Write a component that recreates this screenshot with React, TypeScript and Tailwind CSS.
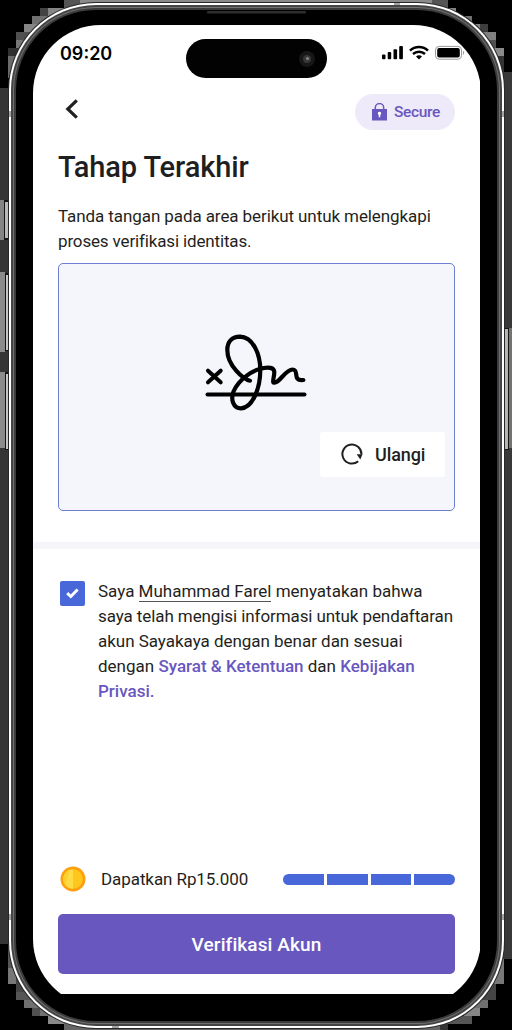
import React from 'react';

type Block = [number, number, number, number, string];

const BLOCKS: Block[] = [
  [0, 88, 10, 856, '#353535'],
  [503, 72, 9, 887, '#383838'],
  [72, 0, 368, 8, '#8a8a8a'],
  [64, 0, 16, 8, '#555555'], [48, 8, 24, 8, '#858585'], [40, 8, 8, 8, '#444444'],
  [32, 16, 16, 8, '#707070'], [24, 24, 16, 8, '#858585'], [16, 32, 16, 8, '#505050'],
  [16, 40, 10, 8, '#777777'], [8, 48, 12, 8, '#303030'], [8, 56, 8, 22, '#6a6a6a'],
  [432, 0, 16, 8, '#555555'], [440, 8, 16, 8, '#858585'], [456, 16, 16, 8, '#707070'],
  [464, 24, 16, 8, '#858585'], [480, 24, 8, 8, '#3d3d3d'], [472, 32, 24, 8, '#808080'],
  [480, 40, 16, 8, '#505050'], [488, 48, 16, 8, '#8a8a8a'], [496, 56, 8, 16, '#333333'],
  [8, 944, 6, 40, '#555555'], [8, 968, 8, 16, '#777777'], [16, 976, 10, 16, '#444444'],
  [16, 992, 16, 8, '#555555'], [24, 1000, 16, 8, '#707070'], [32, 1008, 16, 8, '#505050'],
  [40, 1008, 16, 8, '#707070'], [48, 1016, 24, 8, '#888888'], [64, 1022, 384, 8, '#666666'],
  [496, 959, 8, 25, '#777777'], [488, 976, 16, 8, '#777777'], [488, 984, 8, 16, '#454545'],
  [480, 992, 16, 8, '#454545'], [472, 1000, 16, 8, '#707070'], [464, 1008, 16, 8, '#858585'],
  [448, 1016, 24, 8, '#555555'], [440, 1022, 8, 8, '#333333'],
];

const DETAILS: Block[] = [
  [9, 111, 2, 6, '#a5a5a5'], [502, 111, 2, 6, '#a5a5a5'],
  [9, 914, 2, 6, '#a5a5a5'], [502, 914, 2, 6, '#a5a5a5'],
  [394, 3, 6, 2, '#a5a5a5'], [112, 1026, 7, 2, '#a5a5a5'],
];

function Blocks({ items }: { items: Block[] }) {
  return (
    <>
      {items.map(([x, y, w, h, c], i) => (
        <rect key={i} x={x} y={y} width={w} height={h} fill={c} />
      ))}
    </>
  );
}

function Backdrop() {
  return (
    <svg className="absolute inset-0" width="512" height="1030" shapeRendering="crispEdges">
      <rect width="512" height="1030" fill="#000" />
      <Blocks items={BLOCKS} />
    </svg>
  );
}

function FrameDetails() {
  return (
    <svg className="pointer-events-none absolute inset-0" width="512" height="1030">
      <Blocks items={DETAILS} />
      <rect x="207" y="11" width="99" height="2.4" rx="1.2" fill="#2e2e2e" />
    </svg>
  );
}

function SideKeys() {
  return (
    <svg className="absolute inset-0" width="512" height="1030" shapeRendering="crispEdges">
      <rect x="0" y="200" width="4" height="40" fill="#858585" />
      <rect x="4" y="200" width="5" height="40" fill="#161616" />
      <rect x="5" y="202" width="3" height="36" fill="#bababa" />
      <rect x="0" y="272" width="5" height="80" fill="#8c8c8c" />
      <rect x="5" y="273" width="4" height="78" fill="#161616" />
      <rect x="6" y="275" width="2" height="75" fill="#c8c8c8" />
      <rect x="0" y="372" width="5" height="76" fill="#8c8c8c" />
      <rect x="5" y="372" width="4" height="78" fill="#161616" />
      <rect x="6" y="374" width="2" height="75" fill="#c8c8c8" />
      <rect x="504" y="328" width="5" height="122" fill="#161616" />
      <rect x="505" y="329" width="3" height="120" fill="#b5b5b5" />
      <rect x="509" y="328" width="3" height="120" fill="#77736f" />
    </svg>
  );
}

function StatusIcons() {
  return (
    <svg width="84" height="16" viewBox="0 0 84 16">
      <rect x="1" y="9.5" width="3.5" height="4.8" rx="1" />
      <rect x="6.7" y="7" width="3.5" height="7.3" rx="1" />
      <rect x="12.5" y="4.3" width="3.6" height="10" rx="1" />
      <rect x="18.2" y="1" width="3.7" height="13.3" rx="1" />
      <path d="M29 5.6C34 .7 42 .7 47 5.6" fill="none" stroke="#000" strokeWidth="2.5" />
      <path d="M32 9C35.4 5.9 40.6 5.9 44 9" fill="none" stroke="#000" strokeWidth="2.4" />
      <path d="M35 11.4c1.8-1.6 4.2-1.6 6 0L38 14.4z" />
      <rect x="54.5" y="1.4" width="26" height="12.8" rx="3.6" fill="#fff" stroke="#999" />
      <rect x="56.2" y="3.1" width="22.6" height="9.4" rx="2" />
      <path d="M82 5.7v4.2c1.6-.7 1.6-3.5 0-4.2z" fill="#999" />
    </svg>
  );
}

function Signature() {
  return (
    <svg width="110" height="84" viewBox="0 0 110 84" fill="none" stroke="#000" strokeLinecap="round" strokeLinejoin="round">
      <path d="M6 38.700L18.700 50.300M18.700 38.700L6 50.300" strokeWidth="4" />
      <path d="M5.500 62.600H102.500" strokeWidth="4" />
      <path d="M48 48.700C42 47.500 25.300 34 25.300 18C25.300 9 30.500 4.700 38 4.700C51 5 58.300 22 58.300 38C58.300 57 50 76.300 39 76.300C31 76.300 28.500 67 31.500 59.500C36 49 51 35.700 66 35.700C77 35.700 70 46 71.300 50.500C77 52.500 83 37.500 90.500 37.500C98 37.500 89.500 49.500 101.300 48" strokeWidth="4.200" />
    </svg>
  );
}

export default function App() {
  return (
    <div className="relative h-[1030px] w-[512px] overflow-hidden bg-black font-['Roboto',sans-serif] text-[#1f1f21]">
      <Backdrop />
      <SideKeys />
      <div className="relative ml-2 h-[1030px] w-[497px] pt-[2px]">
        <div className="h-[1027px] rounded-[88px] bg-[#282828] p-px">
          <div className="h-full rounded-[87px] bg-white p-[2px]">
            <div className="h-full rounded-[85px] bg-[#444] p-[2px]">
              <div className="h-full rounded-[83px] bg-[#707070] p-[1px]">
                <div className="h-full rounded-[82px] bg-[#3c3c3c] p-[2px]">
                  <div className="h-full rounded-[80px] bg-black px-[17px] pt-[15px]">
                    <div className="h-[969px] overflow-hidden">
                      <main className="flex h-[982px] w-[448px] flex-col overflow-hidden rounded-[68px] bg-white pb-[13px]">
                        <header className="flex h-[66px] shrink-0 items-start pl-[27px] pr-[16px]">
                          <time className="mt-[15px] w-[126px] font-['Inter',sans-serif] text-[18px] font-semibold leading-[28px] text-black">09:20</time>
                          <div className="mt-[14px] flex h-[39px] w-[141px] shrink-0 items-center justify-end rounded-full bg-[#020202] pr-[12px]">
                            <span className="flex h-[16px] w-[16px] items-center justify-center rounded-full bg-[#171717]">
                              <span className="flex h-[8px] w-[8px] items-center justify-center rounded-full bg-[#383838]">
                                <span className="h-[3px] w-[3px] rounded-full bg-[#858585]" />
                              </span>
                            </span>
                          </div>
                          <div className="ml-auto mt-[20px]"><StatusIcons /></div>
                        </header>

                        <div className="flex h-[42px] shrink-0 items-start justify-between pl-[31px] pr-[26px]">
                          <svg className="mt-[8px]" width="16" height="20" viewBox="0 0 16 20" fill="none" stroke="#202022" strokeWidth="3.2">
                            <path d="M12.800 1.300L3.800 10L12.800 18.700" />
                          </svg>
                          <div className="mt-[3px] flex h-[36px] w-[100px] items-center rounded-full bg-[#eeeaf9] pl-[17px] text-[#6857bf]">
                            <svg className="-mt-px" width="15" height="18" viewBox="0 0 15 18">
                              <path d="M3.300 7V4.800a4.200 4.200 0 0 1 8.400 0V7" fill="none" stroke="currentColor" strokeWidth="1.500" />
                              <path d="M0 6h15v11.500H0z" fill="currentColor" />
                              <path d="M7.500 8.700a1.700 1.700 0 0 1 .8 3.200v2.300H6.700v-2.300a1.700 1.700 0 0 1 .8-3.200z" fill="#fff" />
                            </svg>
                            <span className="ml-[7px] mt-[2px] text-[15.500px] font-medium tracking-[-0.35px]">Secure</span>
                          </div>
                        </div>

                        <h1 className="ml-[25px] mt-[14px] h-[40px] shrink-0 whitespace-nowrap text-[29px] font-medium leading-[40px] tracking-[-0.1px]">Tahap Terakhir</h1>
                        <p className="ml-[25px] mt-[17px] h-[50px] shrink-0 whitespace-nowrap text-[17px] leading-[25px]">
                          <span className="block tracking-[-0.09px]">Tanda tangan pada area berikut untuk melengkapi</span>
                          <span className="block tracking-[-0.15px]">proses verifikasi identitas.</span>
                        </p>

                        <section className="ml-[25px] mt-[9px] flex h-[248px] w-[397px] shrink-0 flex-col rounded-[5px] border border-[#6c7fd0] bg-[#f5f6fb]">
                          <div className="ml-[143px] mt-[68px]"><Signature /></div>
                          <button className="mr-[9px] mt-auto mb-[33px] flex h-[45px] w-[125px] items-center self-end rounded-[3px] bg-white pl-[21px]">
                            <svg className="-mt-[2px]" width="22" height="22" viewBox="0 0 22 22" fill="none">
                              <path d="M17.200 18.200A9.500 9.500 0 1 1 20.400 11.500" stroke="#202022" strokeWidth="2" />
                              <path d="M15.700 11.200h5.800l-2.200 5.300z" fill="#202022" />
                            </svg>
                            <span className="ml-[12px] text-[18px] font-medium tracking-[-0.1px]">Ulangi</span>
                          </button>
                        </section>

                        <div className="mt-[31px] h-[7px] shrink-0 bg-[#f6f6fa]" />

                        <div className="mt-[30px] flex shrink-0 pl-[27px]">
                          <span className="mt-[2px] flex h-[25px] w-[25px] items-center justify-center rounded-[2px] bg-[#4868da]">
                            <svg width="13" height="11" viewBox="0 0 13 11" fill="none" stroke="#fff" strokeWidth="3"><path d="M1.200 5.200L4.800 8.500L11.600 1.500" /></svg>
                          </span>
                          <p className="ml-[13px] whitespace-nowrap text-[17px] leading-[24.900px]">
                            <span className="block">Saya <span className="border-b border-[#555]">Muhammad Farel</span> menyatakan bahwa</span>
                            <span className="block tracking-[-0.09px]">saya telah mengisi informasi untuk pendaftaran</span>
                            <span className="block tracking-[-0.03px]">akun Sayakaya dengan benar dan sesuai</span>
                            <span className="block">dengan <span className="font-medium text-[#6857bf]">Syarat &amp; Ketentuan</span> dan <span className="font-medium text-[#6857bf]">Kebijakan</span></span>
                            <span className="block font-medium text-[#6857bf]">Privasi.</span>
                          </p>
                        </div>

                        <footer className="mt-auto shrink-0">
                          <div className="flex h-[28px] items-center pl-[27px] pr-[26px]">
                            <svg width="26" height="26" viewBox="0 0 26 26">
                              <circle cx="13" cy="13" r="12.500" fill="#ff9f10" />
                              <circle cx="13" cy="13" r="9.800" fill="#ffc61b" />
                              <path d="M13 3.200a9.800 9.800 0 0 0 0 19.600z" fill="#ffdc45" />
                              <path d="M9.500 4a9.800 9.800 0 0 0-4 15.400z" fill="#ffcf2b" />
                            </svg>
                            <span className="ml-[15px] mt-[2px] whitespace-nowrap text-[17px] tracking-[-0.08px]">Dapatkan Rp15.000</span>
                            <div className="ml-auto flex h-[11px] w-[172px] gap-[3px] overflow-hidden rounded-full">
                              <span className="flex-1 bg-[#4868da]" />
                              <span className="flex-1 bg-[#4868da]" />
                              <span className="flex-1 bg-[#4868da]" />
                              <span className="flex-1 bg-[#4868da]" />
                            </div>
                          </div>
                          <button className="mx-[25px] mt-[21px] mb-[20px] block h-[60px] w-[397px] rounded-[5px] bg-[#6857bf] pt-[2px] text-[19px] font-medium tracking-[0.1px] text-white">Verifikasi Akun</button>
                        </footer>
                      </main>
                    </div>
                  </div>
                </div>
              </div>
            </div>
          </div>
        </div>
      </div>
      <FrameDetails />
    </div>
  );
}
